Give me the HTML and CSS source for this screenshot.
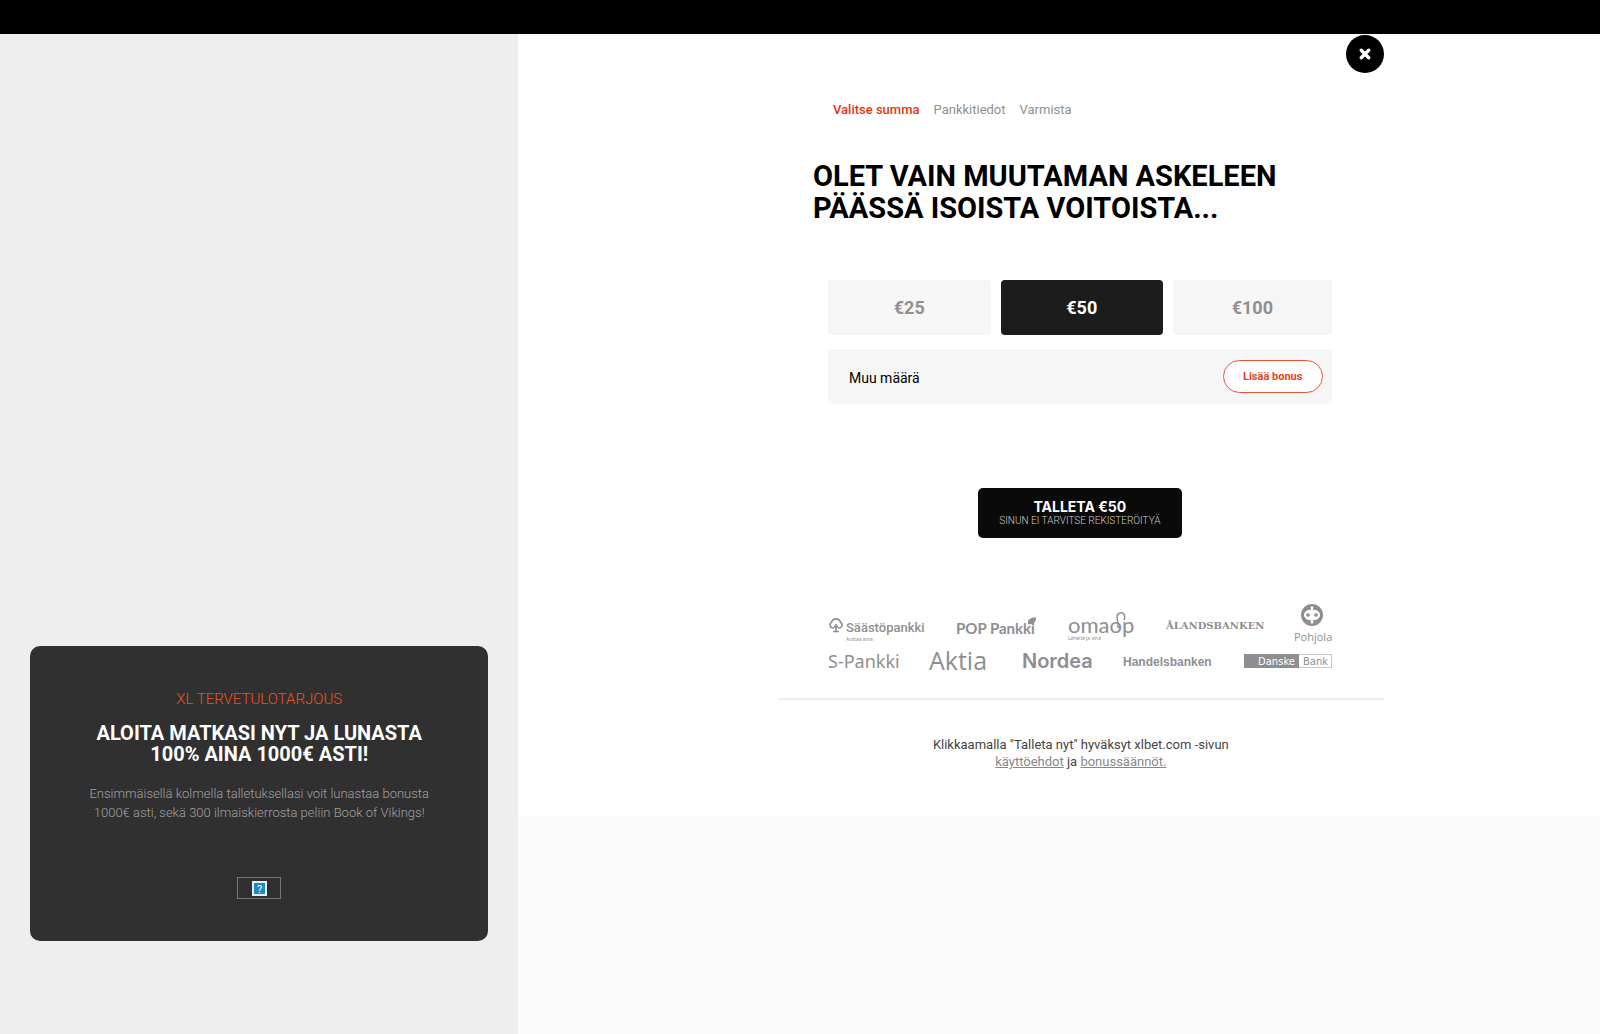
FILE: index.html
```html
<!DOCTYPE html>
<html lang="fi">
<head>
  <meta charset="UTF-8">
  <meta name="viewport" content="width=device-width, initial-scale=1.0">
  <title>XLBet - Talleta</title>
  <link rel="stylesheet" href="styles.css">
</head>
<body>
  <header class="topbar"></header>

  <div class="page">
    <aside class="sidebar">
      <section class="offer">
        <p class="offer-tag">XL TERVETULOTARJOUS</p>
        <h2>ALOITA MATKASI NYT JA LUNASTA<br>100% AINA 1000€ ASTI!</h2>
        <p class="offer-text">Ensimmäisellä kolmella talletuksellasi voit lunastaa bonusta<br>1000€ asti, sekä 300 ilmaiskierrosta peliin Book of Vikings!</p>
        <div class="offer-image">
          <svg width="15" height="15" viewBox="0 0 15 15">
            <rect width="15" height="15" fill="#e4f3fb"/>
            <rect x="2" y="2" width="11" height="11" fill="#1b8ac4"/>
            <text x="7.5" y="11.5" text-anchor="middle" font-size="11" fill="#fff">?</text>
          </svg>
        </div>
      </section>
    </aside>

    <main class="main">
      <div class="panel">
        <div class="content">
          <button class="close" aria-label="Sulje">
            <svg width="12" height="12" viewBox="0 0 12 12">
              <path d="M2.3 2.3l7.4 7.4M9.7 2.3l-7.4 7.4" stroke="#fff" stroke-width="3.4" stroke-linecap="round"/>
            </svg>
          </button>

          <nav class="steps">
            <a href="#" class="active">Valitse summa</a>
            <a href="#">Pankkitiedot</a>
            <a href="#">Varmista</a>
          </nav>

          <h1>OLET VAIN MUUTAMAN ASKELEEN<br>PÄÄSSÄ ISOISTA VOITOISTA...</h1>

          <form class="deposit">
            <div class="amounts">
              <button type="button">€25</button>
              <button type="button" class="selected">€50</button>
              <button type="button">€100</button>
            </div>
            <div class="other">
              <input type="text" id="amount" placeholder="Muu määrä" aria-label="Muu määrä">
              <button type="button" class="bonus">Lisää bonus</button>
            </div>
            <button type="submit" class="submit">
              <strong>TALLETA €50</strong>
              <span>SINUN EI TARVITSE REKISTERÖITYÄ</span>
            </button>
          </form>

          <div class="banks">
            <div class="bank-row">
              <svg width="95" height="40" viewBox="0 0 95 40">
                <path d="M6 25H4.500A3.200 3.200 0 0 1 3.500 19.200A4.700 4.700 0 0 1 12.500 19.200A3.200 3.200 0 0 1 12 25H10" fill="none" stroke="#8e8e92" stroke-width="1.600"/>
                <path d="M8 21v7M5 28.500h6M8 25l-2-2M8 25l2-2" fill="none" stroke="#8e8e92" stroke-width="1.600"/>
                <text class="saasto" x="18" y="29">Säästöpankki</text>
                <text class="tiny" x="18" y="38">Auttaa aina</text>
              </svg>
              <svg width="80" height="40" viewBox="0 0 80 40">
                <text class="pop" x="0" y="31">POP Pankki</text>
                <path d="M72 21C71 16 75 15 80 14C80 19 78 22 72 21z" fill="#8e8e92"/>
              </svg>
              <svg width="65" height="40" viewBox="0 0 65 40">
                <text class="oma" x="0" y="30">omaop</text>
                <path d="M50 25C51 18 46 11 52 10C56 9 58 13 56 17" fill="none" stroke="#8e8e92" stroke-width="1.500"/>
                <text class="tiny" x="0" y="37">Lähellä ja sinä</text>
              </svg>
              <svg width="95" height="40" viewBox="0 0 95 40">
                <text class="aland" x="0" y="26">ÅLANDSBANKEN</text>
              </svg>
              <svg width="38" height="40" viewBox="0 0 38 40">
                <circle cx="18" cy="12" r="11" fill="#8e8e92"/>
                <rect x="10.500" y="7.500" width="15" height="9" rx="4.500" fill="#fff" stroke="#fff" stroke-width="1"/>
                <path d="M18 3.500v17" stroke="#fff" stroke-width="2.500"/>
                <path d="M14 10v4M12 12h4M22 10v4M20 12h4" stroke="#8e8e92" stroke-width="1.400"/>
                <text class="pohjola" x="0" y="38">Pohjola</text>
              </svg>
            </div>
            <div class="bank-row">
              <svg width="70" height="24" viewBox="0 0 70 24">
                <text class="spankki" x="0" y="19">S-Pankki</text>
              </svg>
              <svg width="62" height="24" viewBox="0 0 62 24">
                <text class="aktia" x="0" y="21">Aktia</text>
              </svg>
              <svg width="70" height="24" viewBox="0 0 70 24">
                <text class="nordea" x="0" y="19">Nordea</text>
              </svg>
              <svg width="90" height="24" viewBox="0 0 90 24">
                <text class="handels" x="0" y="17">Handelsbanken</text>
              </svg>
              <svg width="88" height="24" viewBox="0 0 88 24">
                <rect x="0.500" y="5.500" width="87" height="13" fill="#fff" stroke="#c9c9cb"/>
                <rect y="5" width="55" height="14" fill="#8e8e92"/>
                <text class="danske" x="14" y="16" fill="#fff">Danske</text>
                <text class="danske" x="59" y="16">Bank</text>
              </svg>
            </div>
          </div>

          <p class="terms">Klikkaamalla "Talleta nyt" hyväksyt xlbet.com -sivun<br><a href="#">käyttöehdot</a> ja <a href="#">bonussäännöt.</a></p>
        </div>
      </div>
    </main>
  </div>
</body>
</html>
```
FILE: styles.css
```css
* {
  box-sizing: border-box;
}
body {
  margin: 0;
  min-height: 100vh;
  display: flex;
  flex-direction: column;
  font-family: Roboto, "Liberation Sans", sans-serif;
  background: #fafafa;
  color: #000;
}
h1, h2, p {
  margin: 0;
}
button {
  font-family: inherit;
  border: none;
  padding: 0;
  cursor: pointer;
}
.topbar {
  height: 34px;
  background: #000;
}
.page {
  flex: 1;
  display: flex;
}

/* left side */
.sidebar {
  width: 32.4%;
  display: flex;
  flex-direction: column;
  justify-content: flex-end;
  padding: 0 30px 93px;
  background: #eee;
}
.offer {
  padding: 43px 20px 42px;
  border-radius: 10px;
  background: #303030;
  text-align: center;
}
.offer-tag {
  font-size: 15px;
  line-height: 20px;
  font-weight: 300;
  color: #f0501e;
}
.offer h2 {
  margin-top: 14px;
  font-size: 20px;
  line-height: 21px;
  font-weight: 700;
  color: #fff;
}
.offer-text {
  margin-top: 19px;
  font-size: 13px;
  line-height: 19px;
  font-weight: 300;
  color: #a0a0a0;
}
.offer-image {
  display: flex;
  align-items: center;
  justify-content: center;
  width: 44px;
  height: 22px;
  margin: 55px auto 0;
  border: 1px solid #777;
}

/* right side */
.main {
  flex: 1;
}
.panel {
  background: #fff;
  padding-bottom: 46px;
}
.content {
  position: relative;
  margin: 0 20% 0 24%;
  padding-top: 68px;
}
.close {
  position: absolute;
  top: 1px;
  right: 0;
  display: flex;
  align-items: center;
  justify-content: center;
  width: 38px;
  height: 38px;
  border-radius: 50%;
  background: #000;
}
.steps {
  display: flex;
  gap: 14px;
  padding-left: 55px;
  font-size: 13px;
  line-height: 16px;
}
.steps a {
  color: #909090;
  text-decoration: none;
}
.steps .active {
  color: #e63312;
  font-weight: 500;
}
h1 {
  margin-top: 42px;
  padding-left: 35px;
  font-size: 29px;
  line-height: 32px;
  font-weight: 700;
}
.deposit {
  margin-top: 56px;
  padding: 0 52px 0 50px;
}
.amounts {
  display: grid;
  grid-template-columns: 41fr 41fr 40fr;
  gap: 10px;
}
.amounts button {
  height: 55px;
  border-radius: 4px;
  background: #f6f6f6;
  font-size: 18px;
  font-weight: 700;
  color: #909090;
}
.amounts .selected {
  background: #1c1c1c;
  color: #fff;
}
.other {
  display: flex;
  align-items: center;
  height: 55px;
  margin-top: 14px;
  padding: 0 9px 0 21px;
  border-radius: 4px;
  background: #f6f6f6;
}
.other input {
  flex: 1;
  min-width: 0;
  padding: 2px 0 0;
  border: none;
  outline: none;
  background: none;
  font-family: inherit;
  font-size: 14px;
}
.other input::placeholder {
  color: #000;
}
.bonus {
  width: 100px;
  height: 33px;
  border: 1px solid #e8553a;
  border-radius: 17px;
  background: #fff;
  font-size: 11px;
  font-weight: 700;
  color: #e8431f;
}
.submit {
  display: block;
  width: 204px;
  height: 50px;
  margin: 84px auto 0;
  border-radius: 5px;
  background: #0a0a0a;
  color: #fff;
}
.submit strong, .submit span {
  display: block;
}
.submit strong {
  font-family: Inter, sans-serif;
  font-size: 14px;
  line-height: 15px;
}
.submit span {
  font-size: 10px;
  line-height: 14px;
  font-weight: 300;
  color: #ccc;
}

/* bank logos */
.banks {
  margin-top: 65px;
  padding: 0 52px 25px 50px;
  border-bottom: 2px solid #eee;
}
.bank-row {
  display: flex;
  justify-content: space-between;
}
.bank-row + .bank-row {
  margin-top: 6px;
}
.bank-row svg {
  overflow: visible;
}
.bank-row text {
  fill: #8e8e92;
}
.bank-row text[fill] {
  fill: #fff;
}
.saasto {
  font: 500 13px Roboto, sans-serif;
}
.tiny {
  font: 5px "Noto Sans", sans-serif;
}
.pop {
  font: 700 15px Lato, sans-serif;
}
.oma {
  font: 22px Lato, sans-serif;
}
.aland {
  font: 700 10px "DejaVu Serif", serif;
}
.pohjola {
  font: 11px "Open Sans", sans-serif;
}
.spankki {
  font: 18px "Noto Sans", sans-serif;
}
.aktia {
  font: 500 25px "Open Sans", sans-serif;
}
.nordea {
  font: 600 20px Inter, sans-serif;
}
.handels {
  font: 700 12px "Liberation Sans", sans-serif;
}
.danske {
  font: 10px "DejaVu Sans", sans-serif;
}

.terms {
  margin-top: 36px;
  font-size: 13px;
  line-height: 17px;
  text-align: center;
  color: #444;
}
.terms a {
  color: #888;
}
```
